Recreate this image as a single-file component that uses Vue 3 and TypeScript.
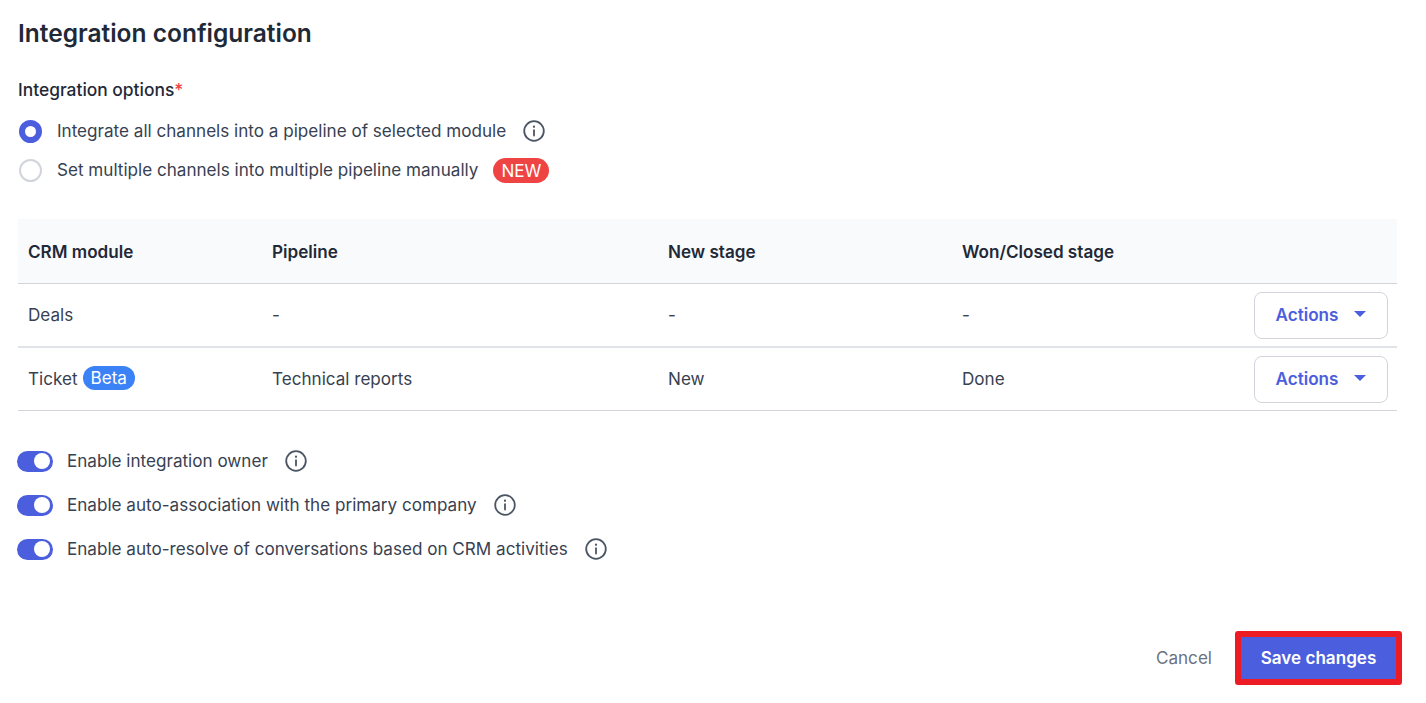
<script setup lang="ts">
interface Row { module: string; beta?: boolean; pipeline: string; stage: string; won: string }
const rows: Row[] = [
  { module: 'Deals', pipeline: '-', stage: '-', won: '-' },
  { module: 'Ticket', beta: true, pipeline: 'Technical reports', stage: 'New', won: 'Done' },
]
const toggles = [
  'Enable integration owner',
  'Enable auto-association with the primary company',
  'Enable auto-resolve of conversations based on CRM activities',
]
</script>

<template>
  <main class="page">
    <h1 class="title">Integration configuration</h1>
    <div class="label">Integration options<span class="req">*</span></div>
    <div class="radios">
      <div class="radio-row">
        <span class="radio on"></span>
        <span class="txt">Integrate all channels into a pipeline of selected module</span>
        <svg class="info" viewBox="0 0 22 22" width="22" height="22" fill="none" stroke="#4b5563" stroke-width="1.8" stroke-linecap="round"><circle cx="11" cy="11" r="9.8"/><path d="M11 10.2v5.4"/><path d="M11 6.7v.1" stroke-width="2.2"/></svg>
      </div>
      <div class="radio-row">
        <span class="radio"></span>
        <span class="txt">Set multiple channels into multiple pipeline manually</span>
        <span class="new">NEW</span>
      </div>
    </div>

    <div class="table">
      <div class="tr head">
        <div>CRM module</div><div>Pipeline</div><div>New stage</div><div>Won/Closed stage</div><div></div>
      </div>
      <div v-for="r in rows" :key="r.module" class="tr">
        <div class="mod">{{ r.module }}<span v-if="r.beta" class="beta">Beta</span></div>
        <div>{{ r.pipeline }}</div>
        <div>{{ r.stage }}</div>
        <div>{{ r.won }}</div>
        <div class="act">
          <button class="actions">Actions<svg width="12" height="6" viewBox="0 0 12 6"><path d="M0 0h12L6 6z" fill="#4b5ede"/></svg></button>
        </div>
      </div>
    </div>

    <div class="toggles">
      <div v-for="t in toggles" :key="t" class="toggle-row">
        <span class="switch"><span class="knob"></span></span>
        <span class="txt">{{ t }}</span>
        <svg class="info" viewBox="0 0 22 22" width="22" height="22" fill="none" stroke="#4b5563" stroke-width="1.8" stroke-linecap="round"><circle cx="11" cy="11" r="9.8"/><path d="M11 10.2v5.4"/><path d="M11 6.7v.1" stroke-width="2.2"/></svg>
      </div>
    </div>

    <footer class="footer">
      <button class="cancel">Cancel</button>
      <span class="ring"><button class="save">Save changes</button></span>
    </footer>
  </main>
</template>

<style>
html, body { margin: 0; background: #fff; }
</style>

<style scoped>
.page {
  box-sizing: border-box;
  width: 1426px;
  height: 703px;
  padding: 17px 29px 0 18px;
  font-family: Inter, "Liberation Sans", sans-serif;
  font-size: 17.1px;
  color: #374151;
  overflow: hidden;
}
.title { margin: 0; font-size: 24.5px; line-height: 32px; font-weight: 600; color: #1f2937; }
.label { margin-top: 29px; line-height: 24px; font-weight: 500; color: #1f2937; font-size: 17.4px; }
.req { color: #ef4444; }
.radios { margin-top: 17px; display: flex; flex-direction: column; gap: 15px; }
.radio-row { display: flex; align-items: center; height: 24px; }
.radio { box-sizing: border-box; width: 23px; height: 23px; margin-left: 1px; border: 2px solid #d1d5db; border-radius: 50%; background: #fff; }
.radio.on { border: 6px solid #4b5ede; }
.txt { margin-left: 15px; line-height: 24px; white-space: nowrap; }
.toggle-row .txt { margin-left: 14px; }
.info { margin-left: 17px; }
.new { margin-left: 15px; height: 25px; line-height: 25px; padding: 0 8px; border-radius: 13px; background: #ef4444; color: #fff; }
.table { margin-top: 37px; }
.tr { display: grid; grid-template-columns: 254px 396px 294px 1fr 154px; height: 64px; align-items: center; border-bottom: 1px solid #d1d5db; box-sizing: border-box; }
.tr.head { height: 65px; }
.tr:nth-child(2) { border-bottom: 2px solid #e0e3e8; }
.tr:nth-child(3) { height: 63px; }
.tr > div:first-child { padding-left: 10px; }
.tr:not(.head) > div:not(.act) { margin-bottom: 2px; }
.head { background: #f9fafb; font-weight: 600; color: #1f2937; }
.mod { display: flex; align-items: center; }
.beta { margin-left: 5px; height: 24px; line-height: 24px; padding: 0 8px; border-radius: 12px; background: #3b82f6; color: #fff; }
.act { display: flex; justify-content: flex-end; padding-right: 9px; }
.actions {
  box-sizing: border-box; width: 134px; height: 47px; padding: 0 0 2px;
  display: flex; align-items: center; justify-content: center; gap: 16px;
  border: 1.5px solid #d1d5db; border-radius: 8px; background: #fff;
  color: #4b5ede; font: 600 17.1px Inter, sans-serif;
}
.toggles { margin-top: 38px; display: flex; flex-direction: column; gap: 20px; }
.toggle-row { display: flex; align-items: center; height: 24px; }
.switch { box-sizing: border-box; width: 36px; height: 21px; margin-left: -1px; padding: 2px 3px; border-radius: 11px; background: #4b5ede; display: flex; justify-content: flex-end; }
.knob { width: 16px; height: 16px; margin-top: .5px; border-radius: 50%; background: #fff; }
.footer { margin-top: 76px; display: flex; justify-content: flex-end; align-items: center; }
.cancel { border: 0; background: none; padding: 0 0 2px; color: #6b7280; font: 400 17.1px Inter, sans-serif; margin-right: 23px; }
.ring { display: block; margin: -6px -5px -6px 0; border: 6px solid #ed1c24; border-radius: 3px; line-height: 0; }
.save {
  width: 155px; height: 42px; padding: 0 0 2px; border: 0; background: #4b5ede; color: #fff;
  font: 600 17.1px Inter, sans-serif;
}
</style>
